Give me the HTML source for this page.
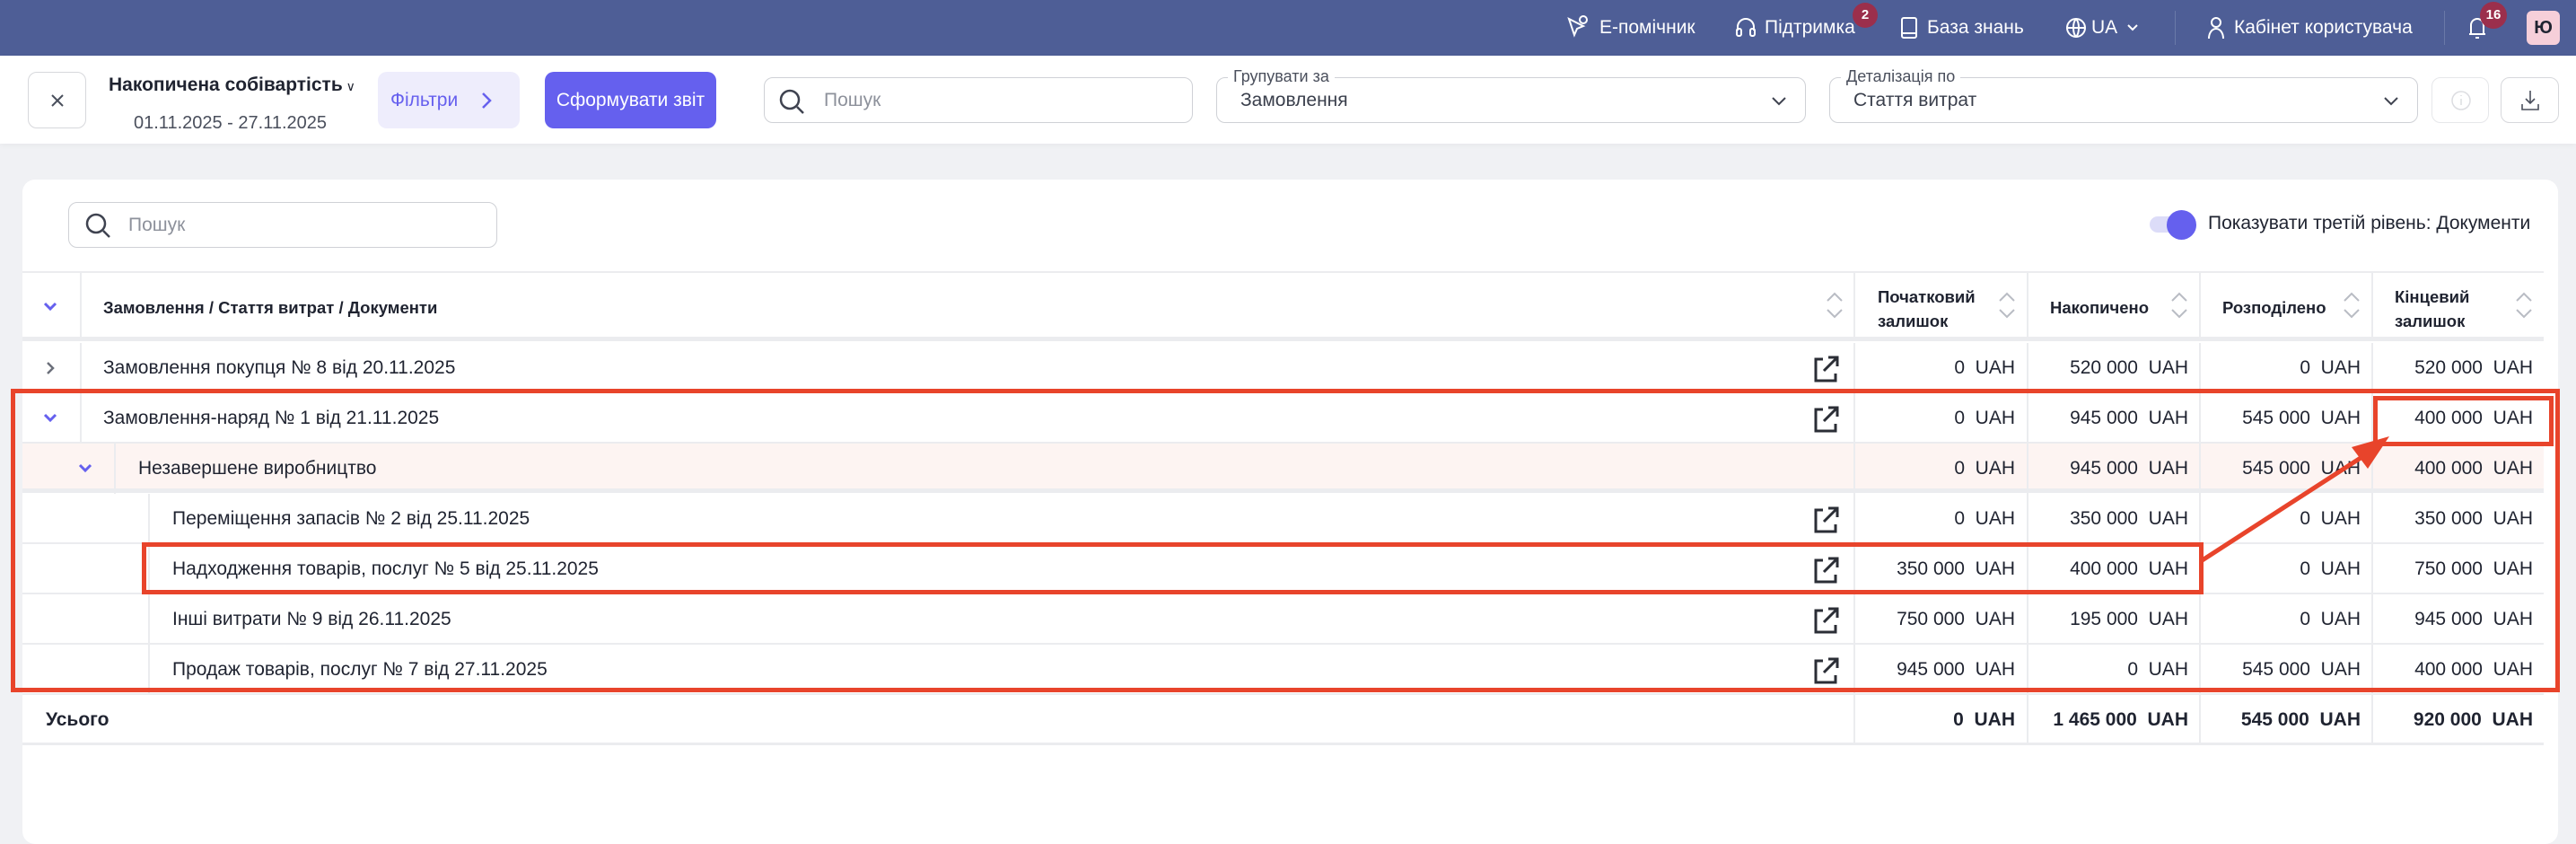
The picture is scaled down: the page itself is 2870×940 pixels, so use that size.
<!DOCTYPE html>
<html><head><meta charset="utf-8">
<style>
*{box-sizing:border-box;margin:0;padding:0}
body{width:2870px;height:922px;overflow:hidden;background:#f0f1f4;font-family:"Liberation Sans",sans-serif;color:#1f2330;position:relative}
.abs{position:absolute}
.top{left:0;top:0;width:2870px;height:62px;background:#4e5e96;color:#fff;font-size:21px}
.top .t{position:absolute;top:19px}
.badge{position:absolute;background:#9b2f4c;color:#fff;border-radius:50%;font-size:15px;font-weight:bold;text-align:center}
.hdr{left:0;top:62px;width:2870px;height:98px;background:#fff;box-shadow:0 2px 6px rgba(0,0,0,.04)}
.btn{position:absolute;border:1px solid #d7d8dc;border-radius:10px;background:#fff}
.inp{position:absolute;border:1px solid #cfd1d6;border-radius:10px;background:#fff}
.card{left:25px;top:200px;width:2825px;height:740px;background:#fff;border-radius:14px}
.row{position:absolute;left:25px;width:2809px;height:56px;border-bottom:2px solid #ebecef;font-size:21px}
.row .n{position:absolute;top:16px}
.num{position:absolute;top:16px;text-align:right;width:180px}
.vs{position:absolute;top:0;width:2px;height:56px;background:#ebecef}
.red{position:absolute;border:5px solid #e8442b}
</style></head><body>
<div class="abs top">
  <svg class="abs" style="left:1745px;top:16px" width="26" height="28" viewBox="0 0 26 28" fill="none" stroke="#fff" stroke-width="2"><path d="M3 5l6 18 3-7 7-3z"/><circle cx="19" cy="6" r="4"/></svg>
  <span class="t" style="left:1782px">Е-помічник</span>
  <svg class="abs" style="left:1932px;top:18px" width="26" height="26" viewBox="0 0 26 26" fill="none" stroke="#fff" stroke-width="2"><path d="M4 16v-4a9 9 0 0 1 18 0v4"/><rect x="3" y="14" width="5" height="8" rx="2"/><rect x="18" y="14" width="5" height="8" rx="2"/></svg>
  <span class="t" style="left:1966px">Підтримка</span>
  <div class="badge" style="left:2064px;top:3px;width:28px;height:28px;line-height:28px">2</div>
  <svg class="abs" style="left:2116px;top:17px" width="22" height="28" viewBox="0 0 22 28" fill="none" stroke="#fff" stroke-width="2"><rect x="3" y="3" width="16" height="22" rx="2"/><path d="M3 20h16"/></svg>
  <span class="t" style="left:2147px">База знань</span>
  <svg class="abs" style="left:2301px;top:19px" width="24" height="24" viewBox="0 0 24 24" fill="none" stroke="#fff" stroke-width="2"><circle cx="12" cy="12" r="10"/><path d="M2 12h20M12 2c4 4 4 16 0 20M12 2c-4 4-4 16 0 20"/></svg>
  <span class="t" style="left:2330px">UA</span>
  <svg class="abs" style="left:2369px;top:26px" width="14" height="10" viewBox="0 0 14 10" fill="none" stroke="#fff" stroke-width="2"><path d="M2 2l5 5 5-5"/></svg>
  <div class="abs" style="left:2423px;top:12px;width:1px;height:38px;background:#6a79a8"></div>
  <svg class="abs" style="left:2458px;top:17px" width="22" height="28" viewBox="0 0 22 28" fill="none" stroke="#fff" stroke-width="2"><circle cx="11" cy="8" r="5"/><path d="M3 26c0-7 4-11 8-11s8 4 8 11"/></svg>
  <span class="t" style="left:2489px">Кабінет користувача</span>
  <div class="abs" style="left:2723px;top:12px;width:1px;height:38px;background:#6a79a8"></div>
  <svg class="abs" style="left:2748px;top:16px" width="24" height="30" viewBox="0 0 24 30" fill="none" stroke="#fff" stroke-width="2"><path d="M5 22V12a7 7 0 0 1 14 0v10zM3 22h18M10 26h4"/></svg>
  <div class="badge" style="left:2763px;top:2px;width:30px;height:30px;line-height:30px">16</div>
  <div class="abs" style="left:2815px;top:12px;width:37px;height:38px;background:#f6cfd9;border-radius:6px;color:#1f2330;font-weight:bold;font-size:20px;text-align:center;line-height:38px">Ю</div>
</div>

<div class="abs hdr">
  <div class="btn" style="left:31px;top:18px;width:65px;height:63px"><svg class="abs" style="left:21px;top:20px" width="22" height="22" viewBox="0 0 22 22" stroke="#4a4f5c" stroke-width="2"><path d="M5 5l12 12M17 5L5 17"/></svg></div>
  <div class="abs" style="left:121px;top:21px;font-size:21px;font-weight:bold">Накопичена собівартість<span style="font-weight:normal;font-size:14px"> ∨</span></div>
  <div class="abs" style="left:149px;top:64px;font-size:20px;color:#4a4f5c">01.11.2025 - 27.11.2025</div>
  <div class="abs" style="left:421px;top:18px;width:158px;height:63px;background:#eeedfc;border-radius:10px;color:#6660ee;font-size:21px"><span class="abs" style="left:14px;top:20px">Фільтри</span><svg class="abs" style="left:114px;top:22px" width="14" height="20" viewBox="0 0 14 20" fill="none" stroke="#6660ee" stroke-width="2.5"><path d="M3 2l8 8-8 8"/></svg></div>
  <div class="abs" style="left:607px;top:18px;width:191px;height:63px;background:#6560ee;border-radius:10px;color:#fff;font-size:21px;text-align:center;line-height:63px">Сформувати звіт</div>
  <div class="inp" style="left:851px;top:24px;width:478px;height:51px"><svg class="abs" style="left:14px;top:10px" width="32" height="32" viewBox="0 0 32 32" fill="none" stroke="#3f4350" stroke-width="2.5"><circle cx="14" cy="14" r="10"/><path d="M22 22l7 7"/></svg><span class="abs" style="left:66px;top:13px;font-size:21px;color:#8d919b">Пошук</span></div>
  <div class="inp" style="left:1355px;top:24px;width:657px;height:51px"><span class="abs" style="left:12px;top:-12px;background:#fff;padding:0 6px 0 6px;font-size:18px;color:#4a4f5c">Групувати за</span><span class="abs" style="left:26px;top:13px;font-size:21px;color:#3a3f4c">Замовлення</span><svg class="abs" style="left:617px;top:20px" width="18" height="12" viewBox="0 0 18 12" fill="none" stroke="#3f4350" stroke-width="2"><path d="M2 2l7 7 7-7"/></svg></div>
  <div class="inp" style="left:2038px;top:24px;width:656px;height:51px"><span class="abs" style="left:12px;top:-12px;background:#fff;padding:0 6px;font-size:18px;color:#4a4f5c">Деталізація по</span><span class="abs" style="left:26px;top:13px;font-size:21px;color:#3a3f4c">Стаття витрат</span><svg class="abs" style="left:616px;top:20px" width="18" height="12" viewBox="0 0 18 12" fill="none" stroke="#3f4350" stroke-width="2"><path d="M2 2l7 7 7-7"/></svg></div>
  <div class="btn" style="left:2709px;top:24px;width:64px;height:51px;border-color:#e6e7ea"><svg class="abs" style="left:20px;top:13px" width="24" height="24" viewBox="0 0 24 24" fill="none" stroke="#dcdde1" stroke-width="1.5"><circle cx="12" cy="12" r="10"/><path d="M12 10v7M12 6v1"/></svg></div>
  <div class="btn" style="left:2786px;top:24px;width:65px;height:51px"><svg class="abs" style="left:20px;top:12px" width="24" height="26" viewBox="0 0 24 26" fill="none" stroke="#4a4f5c" stroke-width="1.6"><path d="M12 2v14M7 11l5 5 5-5M3 17v6h18v-6"/></svg></div>
</div>

<div class="abs card"></div>
<div class="inp" style="left:76px;top:225px;width:478px;height:51px"><svg class="abs" style="left:16px;top:9px" width="32" height="32" viewBox="0 0 32 32" fill="none" stroke="#3f4350" stroke-width="2.5"><circle cx="14" cy="14" r="10"/><path d="M22 22l7 7"/></svg><span class="abs" style="left:66px;top:13px;font-size:21px;color:#8d919b">Пошук</span></div>
<div class="abs" style="left:2395px;top:241px;width:34px;height:18px;background:#dcdcf8;border-radius:9px"></div>
<div class="abs" style="left:2414px;top:234px;width:33px;height:33px;background:#6560ee;border-radius:50%"></div>
<div class="abs" style="left:2460px;top:237px;font-size:21px">Показувати третій рівень: Документи</div>

<!-- table header -->
<div class="abs" style="left:25px;top:302px;width:2809px;height:78px;border-top:2px solid #ebecef;border-bottom:5px solid #ebecef;font-size:18.5px;font-weight:bold">
  <svg class="abs" style="left:23px;top:32px" width="16" height="12" viewBox="0 0 16 12" fill="none" stroke="#6560ee" stroke-width="3"><path d="M2 2l6 6 6-6"/></svg>
  <div class="vs" style="left:64px;height:76px"></div>
  <span class="abs" style="left:90px;top:28px">Замовлення / Стаття витрат / Документи</span>
  <div class="vs" style="left:2040px;height:76px"></div><div class="vs" style="left:2233px;height:76px"></div><div class="vs" style="left:2425px;height:76px"></div><div class="vs" style="left:2617px;height:76px"></div>
  <span class="abs" style="left:2067px;top:13px;line-height:27px">Початковий<br>залишок</span>
  <span class="abs" style="left:2259px;top:28px">Накопичено</span>
  <span class="abs" style="left:2451px;top:28px">Розподілено</span>
  <span class="abs" style="left:2643px;top:13px;line-height:27px">Кінцевий<br>залишок</span>
</div>
<svg class="abs" style="left:0;top:320px" width="2870" height="40" fill="none" stroke="#b9bcc4" stroke-width="2">
  <path d="M2036 15l8-8 8 8M2036 25l8 8 8-8"/>
  <path d="M2228 15l8-8 8 8M2228 25l8 8 8-8"/><path d="M2420 15l8-8 8 8M2420 25l8 8 8-8"/><path d="M2612 15l8-8 8 8M2612 25l8 8 8-8"/><path d="M2804 15l8-8 8 8M2804 25l8 8 8-8"/>
</svg>

<!-- rows -->
<div class="row" style="top:382px">
  <svg class="abs" style="left:26px;top:20px" width="10" height="16" viewBox="0 0 10 16" fill="none" stroke="#6b6f7a" stroke-width="2.5"><path d="M2 2l6 6-6 6"/></svg>
  <div class="vs" style="left:64px"></div><span class="n" style="left:90px">Замовлення покупця № 8 від 20.11.2025</span>
  <svg class="abs" style="left:1992px;top:12px" width="34" height="34" viewBox="0 0 34 34" fill="none" stroke="#2b2e36" stroke-width="3"><path d="M14 6H6v24h22v-8M20 4h10v10M30 4L15 19"/></svg>
  <div class="vs" style="left:2040px"></div><div class="vs" style="left:2233px"></div><div class="vs" style="left:2425px"></div><div class="vs" style="left:2617px"></div>
  <span class="num" style="left:2040px">0&nbsp; UAH</span><span class="num" style="left:2233px">520 000&nbsp; UAH</span><span class="num" style="left:2425px">0&nbsp; UAH</span><span class="num" style="left:2617px">520 000&nbsp; UAH</span>
</div>
<div class="row" style="top:438px">
  <svg class="abs" style="left:23px;top:22px" width="16" height="12" viewBox="0 0 16 12" fill="none" stroke="#6560ee" stroke-width="3"><path d="M2 2l6 6 6-6"/></svg>
  <div class="vs" style="left:64px"></div><span class="n" style="left:90px">Замовлення-наряд № 1 від 21.11.2025</span>
  <svg class="abs" style="left:1992px;top:12px" width="34" height="34" viewBox="0 0 34 34" fill="none" stroke="#2b2e36" stroke-width="3"><path d="M14 6H6v24h22v-8M20 4h10v10M30 4L15 19"/></svg>
  <div class="vs" style="left:2040px"></div><div class="vs" style="left:2233px"></div><div class="vs" style="left:2425px"></div><div class="vs" style="left:2617px"></div>
  <span class="num" style="left:2040px">0&nbsp; UAH</span><span class="num" style="left:2233px">945 000&nbsp; UAH</span><span class="num" style="left:2425px">545 000&nbsp; UAH</span><span class="num" style="left:2617px">400 000&nbsp; UAH</span>
</div>
<div class="row" style="top:494px;height:55px;background:#fdf4f2;border-bottom:5px solid #ebecef">
  <svg class="abs" style="left:62px;top:22px" width="16" height="12" viewBox="0 0 16 12" fill="none" stroke="#6560ee" stroke-width="3"><path d="M2 2l6 6 6-6"/></svg>
  <div class="vs" style="left:102px"></div><span class="n" style="left:129px">Незавершене виробництво</span>
  <div class="vs" style="left:2040px"></div><div class="vs" style="left:2233px"></div><div class="vs" style="left:2425px"></div><div class="vs" style="left:2617px"></div>
  <span class="num" style="left:2040px">0&nbsp; UAH</span><span class="num" style="left:2233px">945 000&nbsp; UAH</span><span class="num" style="left:2425px">545 000&nbsp; UAH</span><span class="num" style="left:2617px">400 000&nbsp; UAH</span>
</div>
<div class="row" style="top:550px">
  <div class="vs" style="left:140px"></div><span class="n" style="left:167px">Переміщення запасів № 2 від 25.11.2025</span>
  <svg class="abs" style="left:1992px;top:12px" width="34" height="34" viewBox="0 0 34 34" fill="none" stroke="#2b2e36" stroke-width="3"><path d="M14 6H6v24h22v-8M20 4h10v10M30 4L15 19"/></svg>
  <div class="vs" style="left:2040px"></div><div class="vs" style="left:2233px"></div><div class="vs" style="left:2425px"></div><div class="vs" style="left:2617px"></div>
  <span class="num" style="left:2040px">0&nbsp; UAH</span><span class="num" style="left:2233px">350 000&nbsp; UAH</span><span class="num" style="left:2425px">0&nbsp; UAH</span><span class="num" style="left:2617px">350 000&nbsp; UAH</span>
</div>
<div class="row" style="top:606px">
  <div class="vs" style="left:140px"></div><span class="n" style="left:167px">Надходження товарів, послуг № 5 від 25.11.2025</span>
  <svg class="abs" style="left:1992px;top:12px" width="34" height="34" viewBox="0 0 34 34" fill="none" stroke="#2b2e36" stroke-width="3"><path d="M14 6H6v24h22v-8M20 4h10v10M30 4L15 19"/></svg>
  <div class="vs" style="left:2040px"></div><div class="vs" style="left:2233px"></div><div class="vs" style="left:2425px"></div><div class="vs" style="left:2617px"></div>
  <span class="num" style="left:2040px">350 000&nbsp; UAH</span><span class="num" style="left:2233px">400 000&nbsp; UAH</span><span class="num" style="left:2425px">0&nbsp; UAH</span><span class="num" style="left:2617px">750 000&nbsp; UAH</span>
</div>
<div class="row" style="top:662px">
  <div class="vs" style="left:140px"></div><span class="n" style="left:167px">Інші витрати № 9 від 26.11.2025</span>
  <svg class="abs" style="left:1992px;top:12px" width="34" height="34" viewBox="0 0 34 34" fill="none" stroke="#2b2e36" stroke-width="3"><path d="M14 6H6v24h22v-8M20 4h10v10M30 4L15 19"/></svg>
  <div class="vs" style="left:2040px"></div><div class="vs" style="left:2233px"></div><div class="vs" style="left:2425px"></div><div class="vs" style="left:2617px"></div>
  <span class="num" style="left:2040px">750 000&nbsp; UAH</span><span class="num" style="left:2233px">195 000&nbsp; UAH</span><span class="num" style="left:2425px">0&nbsp; UAH</span><span class="num" style="left:2617px">945 000&nbsp; UAH</span>
</div>
<div class="row" style="top:718px">
  <div class="vs" style="left:140px"></div><span class="n" style="left:167px">Продаж товарів, послуг № 7 від 27.11.2025</span>
  <svg class="abs" style="left:1992px;top:12px" width="34" height="34" viewBox="0 0 34 34" fill="none" stroke="#2b2e36" stroke-width="3"><path d="M14 6H6v24h22v-8M20 4h10v10M30 4L15 19"/></svg>
  <div class="vs" style="left:2040px"></div><div class="vs" style="left:2233px"></div><div class="vs" style="left:2425px"></div><div class="vs" style="left:2617px"></div>
  <span class="num" style="left:2040px">945 000&nbsp; UAH</span><span class="num" style="left:2233px">0&nbsp; UAH</span><span class="num" style="left:2425px">545 000&nbsp; UAH</span><span class="num" style="left:2617px">400 000&nbsp; UAH</span>
</div>
<div class="row" style="top:774px;font-weight:bold;border-bottom:3px solid #ebecef">
  <span class="n" style="left:26px">Усього</span>
  <div class="vs" style="left:2040px"></div><div class="vs" style="left:2233px"></div><div class="vs" style="left:2425px"></div><div class="vs" style="left:2617px"></div>
  <span class="num" style="left:2040px">0&nbsp; UAH</span><span class="num" style="left:2233px">1 465 000&nbsp; UAH</span><span class="num" style="left:2425px">545 000&nbsp; UAH</span><span class="num" style="left:2617px">920 000&nbsp; UAH</span>
</div>

<!-- annotations -->
<div class="red" style="left:12px;top:433px;width:2840px;height:338px"></div>
<div class="red" style="left:2644px;top:441px;width:201px;height:56px"></div>
<div class="red" style="left:158px;top:604px;width:2297px;height:58px"></div>
<svg class="abs" style="left:0;top:0" width="2870" height="922"><path d="M2452 625L2630 510" stroke="#e8442b" stroke-width="5"/><path d="M2662 486l-42 12 18 24z" fill="#e8442b"/></svg>
</body></html>
